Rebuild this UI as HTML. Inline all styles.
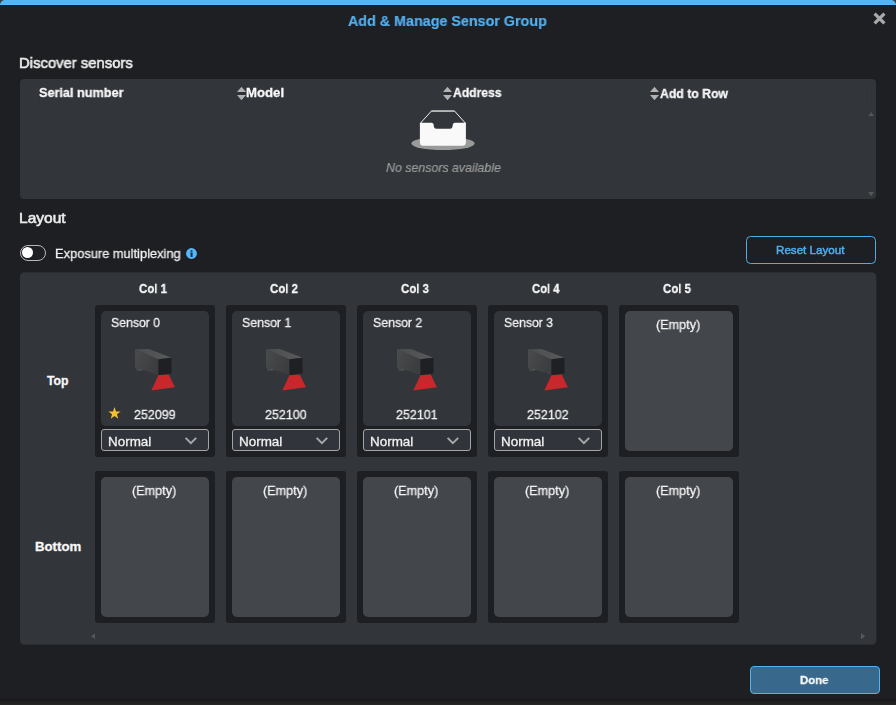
<!DOCTYPE html>
<html lang="en">
<head>
<meta charset="utf-8">
<title>Add &amp; Manage Sensor Group</title>
<style>
*{box-sizing:border-box;margin:0;padding:0}
html,body{width:896px;height:705px;overflow:hidden;background:#1e1f23}
body{position:relative;font-family:"Liberation Sans","DejaVu Sans",sans-serif;color:#ececec;font-size:13px}
.abs{position:absolute;white-space:nowrap;line-height:1}
.t{transform-origin:0 0;will-change:transform}
.lcd{will-change:auto}
#topbar{position:absolute;left:0;top:0;width:896px;height:6px;background:linear-gradient(#52b4f2 0,#52b4f2 4px,#56bbfd 4px,#56bbfd 5px,#171618 5px);border-radius:5px 5px 0 0}
#tc{position:absolute;left:0;top:0;width:896px;height:4px;background:#3c3a3b}
.title{font-size:15px;color:#54b0ee;font-weight:bold;-webkit-text-stroke:0.2px #54b0ee}
.h2{font-size:15px;color:#ececec;-webkit-text-stroke:0.6px #ececec}
.panel{position:absolute;background:#32353a;border-radius:4px}
.th{font-weight:bold;font-size:13px;color:#f8f8f8;-webkit-text-stroke:0.3px #f8f8f8}
.tx{font-size:13px;color:#f2f2f2;-webkit-text-stroke:0.28px #f2f2f2}
.it{font-style:italic;color:#9c9c9c;-webkit-text-stroke:0.2px #9c9c9c}
.btn{font-size:11.5px}
.rs{color:#4fb0ee;-webkit-text-stroke:0.45px #4fb0ee}
.cell{position:absolute;width:120px;height:152px;background:#1e1f23;border-radius:3px}
.card{position:absolute;width:108px;height:115px;background:#32353a;border-radius:5px}
.empty{position:absolute;width:108px;height:140px;background:#43464b;border-radius:5px}
.sel{position:absolute;width:108px;height:22px;border:1px solid #a2a4a6;border-radius:3px;background:#31343a}
.vl{position:absolute;width:1px;background:#2f3237}
</style>
</head>
<body>
<div id="tc"></div><div id="topbar"></div>
<svg class="abs" style="left:872.6px;top:11.5px" width="13" height="13" viewBox="0 0 13 13"><path d="M1.6 1.6L11.4 11.4M11.4 1.6L1.6 11.4" stroke="#a9a9a9" stroke-width="3.3" fill="none"/></svg>
<div class="panel" style="left:20px;top:79px;width:856px;height:120px"></div>
<div class="vl" style="left:39px;top:84px;height:19px"></div>
<div class="vl" style="left:246px;top:84px;height:19px"></div>
<div class="vl" style="left:452px;top:84px;height:19px"></div>
<div class="vl" style="left:659px;top:84px;height:19px"></div>
<div class="vl" style="left:866px;top:84px;height:19px"></div>
<svg class="abs" style="left:237px;top:87px" width="9" height="13" viewBox="0 0 9 13"><rect x="0.5" y="5.6" width="8" height="1.8" fill="#2d2f34"/><path d="M0 5L4.5 -0.2L9 5ZM0 8L9 8L4.5 13.2Z" fill="#b2b2b2"/></svg>
<svg class="abs" style="left:443px;top:87px" width="9" height="13" viewBox="0 0 9 13"><rect x="0.5" y="5.6" width="8" height="1.8" fill="#2d2f34"/><path d="M0 5L4.5 -0.2L9 5ZM0 8L9 8L4.5 13.2Z" fill="#b2b2b2"/></svg>
<svg class="abs" style="left:650px;top:87px" width="9" height="13" viewBox="0 0 9 13"><rect x="0.5" y="5.6" width="8" height="1.8" fill="#2d2f34"/><path d="M0 5L4.5 -0.2L9 5ZM0 8L9 8L4.5 13.2Z" fill="#b2b2b2"/></svg>
<svg class="abs" style="left:867.9px;top:111.7px" width="6.2" height="4.4" viewBox="0 0 7 5"><path d="M0 5L3.5 0L7 5Z" fill="#555759"/></svg>
<svg class="abs" style="left:867.9px;top:192px" width="6.2" height="4.2" viewBox="0 0 7 5"><path d="M0 0L7 0L3.5 5Z" fill="#555759"/></svg>
<svg class="abs" style="left:411px;top:108px" width="64" height="44" viewBox="0 0 64 44">
<ellipse cx="32" cy="35.4" rx="31.6" ry="6.7" fill="#9a9a9a"/>
<path d="M9.4 15.2L20.4 3.1L43.6 3.1L54.4 15.2" stroke="#f2f2f2" stroke-width="1" fill="none"/>
<path d="M20.4 3.1L43.6 3.1" stroke="#b4b4b4" stroke-width="1.7" fill="none"/>
<path d="M8.9 14.8L20.5 14.8Q22.3 14.8 22.6 16.5L23 19Q23.3 20.8 25.2 20.8L39.2 20.8Q41.1 20.8 41.4 19L41.8 16.5Q42.1 14.8 43.9 14.8L54.9 14.8L54.9 34.2Q54.9 37.7 51.4 37.7L12.4 37.7Q8.9 37.7 8.9 34.2Z" fill="#f9f9f9"/>
</svg>
<div class="abs" style="left:20px;top:245px;width:26px;height:16px;border:1px solid #b8b8b8;border-radius:8px"><div style="position:absolute;left:1.3px;top:1.2px;width:11px;height:11px;border-radius:50%;background:#fff"></div></div>
<svg class="abs" style="left:185.5px;top:247.5px" width="11" height="11" viewBox="0 0 11 11"><circle cx="5.5" cy="5.5" r="5.4" fill="#56b8fc"/><path d="M4.1 4.5L6.6 4.5L6.6 8.9L4.6 8.9L4.6 5.3L4.1 5.3Z" fill="#1e2a38"/><rect x="4.4" y="2.2" width="2.2" height="1.5" rx="0.6" fill="#1e2a38"/></svg>
<div class="abs" style="left:746px;top:236px;width:130px;height:28px;border:1px solid #4fabe9;border-radius:4.5px"></div>
<svg class="abs" style="left:0;top:260px" width="896" height="400" viewBox="0 260 896 400"><rect x="20" y="272.2" width="856.3" height="372.5" rx="4.5" fill="#32353a"/></svg>
<div class="cell" style="left:95px;top:305px"></div>
<div class="card" style="left:101px;top:311px"></div>
<svg class="abs" style="left:131px;top:347px" width="48" height="48" viewBox="0 0 48 48"><path d="M4 2.2L27.4 12.2L27.4 27.9L15.5 24Q11 22.3 6.1 24.5L4 19.6Z" fill="url(#gs)"/><polygon points="4,2.2 17.8,2 40.5,10.75 27.4,12.2" fill="url(#gt)"/><polygon points="27.4,12.2 40.5,10.75 40.5,26.5 27.4,27.9" fill="#1f2023"/><polygon points="27.4,28.3 37.7,27.6 44,40.3 20.3,43.5" fill="#c8272b"/><ellipse cx="9.6" cy="22.6" rx="1.6" ry="0.9" fill="#5a5b5d" opacity="0.8"/></svg>
<svg class="abs" style="left:108.2px;top:406.6px" width="13" height="13" viewBox="0 0 13 13"><polygon points="6.50,0.05 8.00,4.44 12.63,4.51 8.93,7.29 10.29,11.72 6.50,9.05 2.71,11.72 4.07,7.29 0.37,4.51 5.00,4.44" fill="#f5c12e"/></svg>
<div class="sel" style="left:101px;top:429px"></div>
<svg class="abs" style="left:184px;top:436px" width="14" height="10" viewBox="0 0 14 10"><path d="M1.6 1.9L6.9 7.2L12.2 1.9" stroke="#a8a8a8" stroke-width="2" fill="none"/></svg>
<div class="cell" style="left:226px;top:305px"></div>
<div class="card" style="left:232px;top:311px"></div>
<svg class="abs" style="left:262px;top:347px" width="48" height="48" viewBox="0 0 48 48"><path d="M4 2.2L27.4 12.2L27.4 27.9L15.5 24Q11 22.3 6.1 24.5L4 19.6Z" fill="url(#gs)"/><polygon points="4,2.2 17.8,2 40.5,10.75 27.4,12.2" fill="url(#gt)"/><polygon points="27.4,12.2 40.5,10.75 40.5,26.5 27.4,27.9" fill="#1f2023"/><polygon points="27.4,28.3 37.7,27.6 44,40.3 20.3,43.5" fill="#c8272b"/><ellipse cx="9.6" cy="22.6" rx="1.6" ry="0.9" fill="#5a5b5d" opacity="0.8"/></svg>
<div class="sel" style="left:232px;top:429px"></div>
<svg class="abs" style="left:315px;top:436px" width="14" height="10" viewBox="0 0 14 10"><path d="M1.6 1.9L6.9 7.2L12.2 1.9" stroke="#a8a8a8" stroke-width="2" fill="none"/></svg>
<div class="cell" style="left:357px;top:305px"></div>
<div class="card" style="left:363px;top:311px"></div>
<svg class="abs" style="left:393px;top:347px" width="48" height="48" viewBox="0 0 48 48"><path d="M4 2.2L27.4 12.2L27.4 27.9L15.5 24Q11 22.3 6.1 24.5L4 19.6Z" fill="url(#gs)"/><polygon points="4,2.2 17.8,2 40.5,10.75 27.4,12.2" fill="url(#gt)"/><polygon points="27.4,12.2 40.5,10.75 40.5,26.5 27.4,27.9" fill="#1f2023"/><polygon points="27.4,28.3 37.7,27.6 44,40.3 20.3,43.5" fill="#c8272b"/><ellipse cx="9.6" cy="22.6" rx="1.6" ry="0.9" fill="#5a5b5d" opacity="0.8"/></svg>
<div class="sel" style="left:363px;top:429px"></div>
<svg class="abs" style="left:446px;top:436px" width="14" height="10" viewBox="0 0 14 10"><path d="M1.6 1.9L6.9 7.2L12.2 1.9" stroke="#a8a8a8" stroke-width="2" fill="none"/></svg>
<div class="cell" style="left:488px;top:305px"></div>
<div class="card" style="left:494px;top:311px"></div>
<svg class="abs" style="left:524px;top:347px" width="48" height="48" viewBox="0 0 48 48"><path d="M4 2.2L27.4 12.2L27.4 27.9L15.5 24Q11 22.3 6.1 24.5L4 19.6Z" fill="url(#gs)"/><polygon points="4,2.2 17.8,2 40.5,10.75 27.4,12.2" fill="url(#gt)"/><polygon points="27.4,12.2 40.5,10.75 40.5,26.5 27.4,27.9" fill="#1f2023"/><polygon points="27.4,28.3 37.7,27.6 44,40.3 20.3,43.5" fill="#c8272b"/><ellipse cx="9.6" cy="22.6" rx="1.6" ry="0.9" fill="#5a5b5d" opacity="0.8"/></svg>
<div class="sel" style="left:494px;top:429px"></div>
<svg class="abs" style="left:577px;top:436px" width="14" height="10" viewBox="0 0 14 10"><path d="M1.6 1.9L6.9 7.2L12.2 1.9" stroke="#a8a8a8" stroke-width="2" fill="none"/></svg>
<div class="cell" style="left:619px;top:305px"></div>
<div class="empty" style="left:625px;top:311px"></div>
<div class="cell" style="left:95px;top:471px"></div>
<div class="empty" style="left:101px;top:477px"></div>
<div class="cell" style="left:226px;top:471px"></div>
<div class="empty" style="left:232px;top:477px"></div>
<div class="cell" style="left:357px;top:471px"></div>
<div class="empty" style="left:363px;top:477px"></div>
<div class="cell" style="left:488px;top:471px"></div>
<div class="empty" style="left:494px;top:477px"></div>
<div class="cell" style="left:619px;top:471px"></div>
<div class="empty" style="left:625px;top:477px"></div>
<svg class="abs" style="left:90.7px;top:632.8px" width="4.5" height="6.4" viewBox="0 0 5 7"><path d="M5 0L5 7L0 3.5Z" fill="#555759"/></svg>
<svg class="abs" style="left:860.9px;top:632.9px" width="4.4" height="6.3" viewBox="0 0 5 7"><path d="M0 0L0 7L5 3.5Z" fill="#555759"/></svg>
<div class="abs" style="left:750px;top:666px;width:130px;height:28px;border:1px solid #55b4f0;border-radius:4px;background:#38688c"></div>
<div id="t_title" class="abs t title" style="left:348.26px;top:13px;transform:scaleX(0.9542)">Add &amp; Manage Sensor Group</div>
<div id="t_disc" class="abs t h2" style="left:19.01px;top:55px;transform:scaleX(0.9890)">Discover sensors</div>
<div id="t_serial" class="abs t th" style="left:39.26px;top:86px;transform:scaleX(0.9740)">Serial number</div>
<div id="t_model" class="abs t th" style="left:246.24px;top:86px;transform:scaleX(1.0139)">Model</div>
<div id="t_address" class="abs t th" style="left:453.07px;top:86px;transform:scaleX(0.9340)">Address</div>
<div id="t_addrow" class="abs t th" style="left:660.26px;top:87px;transform:scaleX(0.9412)">Add to Row</div>
<div id="t_nosens" class="abs t tx it" style="left:386.01px;top:161px;transform:scaleX(0.9521)">No sensors available</div>
<div id="t_layout" class="abs t h2" style="left:18.97px;top:210px;transform:scaleX(1.0339)">Layout</div>
<div id="t_expo" class="abs t tx" style="left:54.51px;top:247px;transform:scaleX(0.9880)">Exposure multiplexing</div>
<div id="t_reset" class="abs t tx btn rs" style="left:775.94px;top:245.2px;transform:scaleX(1.0097)">Reset Layout</div>
<div id="t_col1" class="abs t th" style="left:138.78px;top:282px;transform:scaleX(0.8800)">Col 1</div>
<div id="t_col2" class="abs t th" style="left:269.78px;top:282px;transform:scaleX(0.8800)">Col 2</div>
<div id="t_col3" class="abs t th" style="left:400.78px;top:282px;transform:scaleX(0.8800)">Col 3</div>
<div id="t_col4" class="abs t th" style="left:531.78px;top:282px;transform:scaleX(0.8661)">Col 4</div>
<div id="t_col5" class="abs t th" style="left:662.78px;top:282px;transform:scaleX(0.8800)">Col 5</div>
<div id="t_top" class="abs t th lcd" style="left:46.90px;top:374px;transform:scaleX(0.9422)">Top</div>
<div id="t_bottom" class="abs t th lcd" style="left:34.64px;top:540px;transform:scaleX(1.0169)">Bottom</div>
<div id="t_sensor0" class="abs t tx" style="left:110.53px;top:316px;transform:scaleX(0.9424)">Sensor 0</div>
<div id="t_sn0" class="abs t tx" style="left:133.82px;top:408px;transform:scaleX(0.9576)">252099</div>
<div id="t_normal0" class="abs t tx" style="left:107.67px;top:435px;transform:scaleX(1.0335)">Normal</div>
<div id="t_sensor1" class="abs t tx" style="left:241.53px;top:316px;transform:scaleX(0.9471)">Sensor 1</div>
<div id="t_sn1" class="abs t tx" style="left:264.82px;top:408px;transform:scaleX(0.9576)">252100</div>
<div id="t_normal1" class="abs t tx" style="left:238.67px;top:435px;transform:scaleX(1.0335)">Normal</div>
<div id="t_sensor2" class="abs t tx" style="left:372.53px;top:316px;transform:scaleX(0.9471)">Sensor 2</div>
<div id="t_sn2" class="abs t tx" style="left:395.82px;top:408px;transform:scaleX(0.9576)">252101</div>
<div id="t_normal2" class="abs t tx" style="left:369.67px;top:435px;transform:scaleX(1.0335)">Normal</div>
<div id="t_sensor3" class="abs t tx" style="left:503.53px;top:316px;transform:scaleX(0.9424)">Sensor 3</div>
<div id="t_sn3" class="abs t tx" style="left:526.82px;top:408px;transform:scaleX(0.9576)">252102</div>
<div id="t_normal3" class="abs t tx" style="left:500.67px;top:435px;transform:scaleX(1.0335)">Normal</div>
<div id="t_empty04" class="abs t tx" style="left:656.27px;top:318px;transform:scaleX(0.9718)">(Empty)</div>
<div id="t_empty10" class="abs t tx" style="left:132.27px;top:484px;transform:scaleX(0.9718)">(Empty)</div>
<div id="t_empty11" class="abs t tx" style="left:263.27px;top:484px;transform:scaleX(0.9718)">(Empty)</div>
<div id="t_empty12" class="abs t tx" style="left:394.27px;top:484px;transform:scaleX(0.9718)">(Empty)</div>
<div id="t_empty13" class="abs t tx" style="left:525.27px;top:484px;transform:scaleX(0.9718)">(Empty)</div>
<div id="t_empty14" class="abs t tx" style="left:656.27px;top:484px;transform:scaleX(0.9718)">(Empty)</div>
<div id="t_done" class="abs t th btn" style="left:800.41px;top:674.5px;transform:scaleX(0.9893)">Done</div>
<div style="position:absolute;left:0;top:698px;width:896px;height:7px;background:linear-gradient(#222325 0,#1a1a1b 1px,#191919 1.5px,#262626 100%)"></div>
<svg width="0" height="0" style="position:absolute"><defs>
<linearGradient id="gt" x1="0" y1="0" x2="1" y2="0"><stop offset="0" stop-color="#4b4c4e"/><stop offset="1" stop-color="#5a5b5d"/></linearGradient>
<linearGradient id="gs" x1="0" y1="0" x2="1" y2="0.4"><stop offset="0" stop-color="#4a4b4d"/><stop offset="1" stop-color="#3c3d3f"/></linearGradient>
</defs></svg>
</body>
</html>
